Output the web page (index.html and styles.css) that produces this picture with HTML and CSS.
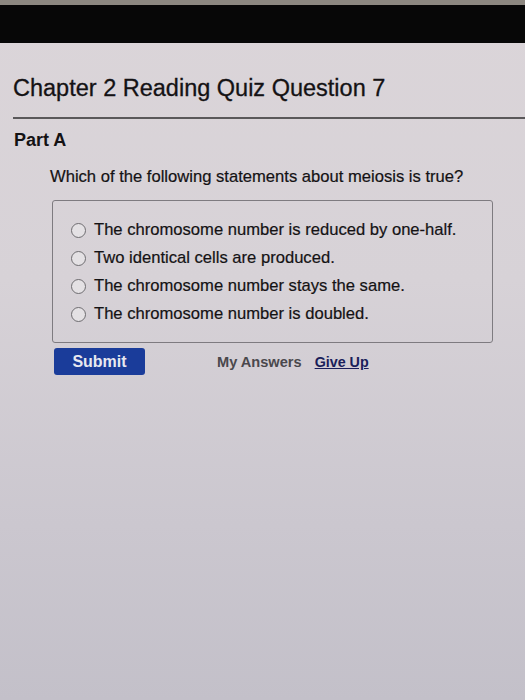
FILE: index.html
```html
<!DOCTYPE html>
<html>
<head>
<meta charset="utf-8">
<link rel="stylesheet" href="styles.css">
</head>
<body>
<div class="bezel"></div>
<div class="blackbar"></div>
<main class="page">
  <h1 class="title">Chapter 2 Reading Quiz Question 7</h1>
  <div class="rule"></div>
  <h2 class="part">Part A</h2>
  <p class="question">Which of the following statements about meiosis is true?</p>
  <div class="choices">
    <label class="choice"><span class="radio"></span>The chromosome number is reduced by one-half.</label>
    <label class="choice"><span class="radio"></span>Two identical cells are produced.</label>
    <label class="choice"><span class="radio"></span>The chromosome number stays the same.</label>
    <label class="choice"><span class="radio"></span>The chromosome number is doubled.</label>
  </div>
  <div class="actions">
    <button class="submit">Submit</button>
    <span class="myanswers">My Answers</span>
    <a class="giveup">Give Up</a>
  </div>
</main>
</body>
</html>
```
FILE: styles.css
```css
html, body {
  margin: 0;
  padding: 0;
}
body {
  width: 525px;
  height: 700px;
  overflow: hidden;
  font-family: "Liberation Sans", Arial, sans-serif;
  background: linear-gradient(180deg, #dbd5d9 0%, #d7d2d7 40%, #cbc7cf 75%, #c3c0c9 100%);
  color: #141214;
}
.bezel {
  height: 5px;
  background: #8c8780;
}
.blackbar {
  height: 38px;
  background: #070707;
}
.page {
  padding: 0 0 0 13px;
}
.title {
  margin: 31px 0 0 0;
  font-size: 23.5px;
  font-weight: normal;
  line-height: 28px;
  color: #141214;
  -webkit-text-stroke: 0.3px #141214;
}
.rule {
  margin-top: 15px;
  height: 2px;
  background: #5a585a;
}
.part {
  margin: 11px 0 0 1px;
  font-size: 18px;
  font-weight: bold;
  line-height: 20px;
}
.question {
  margin: 17px 0 0 37px;
  font-size: 16.6px;
  line-height: 20px;
  -webkit-text-stroke: 0.2px #141214;
}
.choices {
  margin: 13px 0 0 39px;
  width: 441px;
  height: 143px;
  border: 1px solid #7e7b80;
  border-radius: 3px;
  box-sizing: border-box;
  padding: 19px 0 0 18px;
  display: flex;
  flex-direction: column;
  gap: 8px;
}
.choice {
  display: flex;
  align-items: center;
  gap: 8px;
  font-size: 16.6px;
  line-height: 20px;
  height: 20px;
  -webkit-text-stroke: 0.2px #141214;
}
.radio {
  width: 13px;
  height: 13px;
  border: 1.5px solid #6e6c70;
  border-radius: 50%;
  background: #e4e1e4;
  flex: none;
}
.actions {
  margin: 5px 0 0 41px;
  display: flex;
  align-items: center;
}
.submit {
  width: 91px;
  height: 27px;
  border: none;
  border-radius: 3px;
  background: #1a3c9a;
  color: #e8e8f0;
  font-family: "Liberation Sans", Arial, sans-serif;
  font-weight: bold;
  font-size: 16px;
  padding: 0;
}
.myanswers {
  margin-left: 72px;
  font-size: 14.6px;
  font-weight: bold;
  color: #4a484c;
}
.giveup {
  margin-left: 13px;
  font-size: 14.3px;
  font-weight: bold;
  color: #1a1e5a;
  text-decoration: underline;
}
```
